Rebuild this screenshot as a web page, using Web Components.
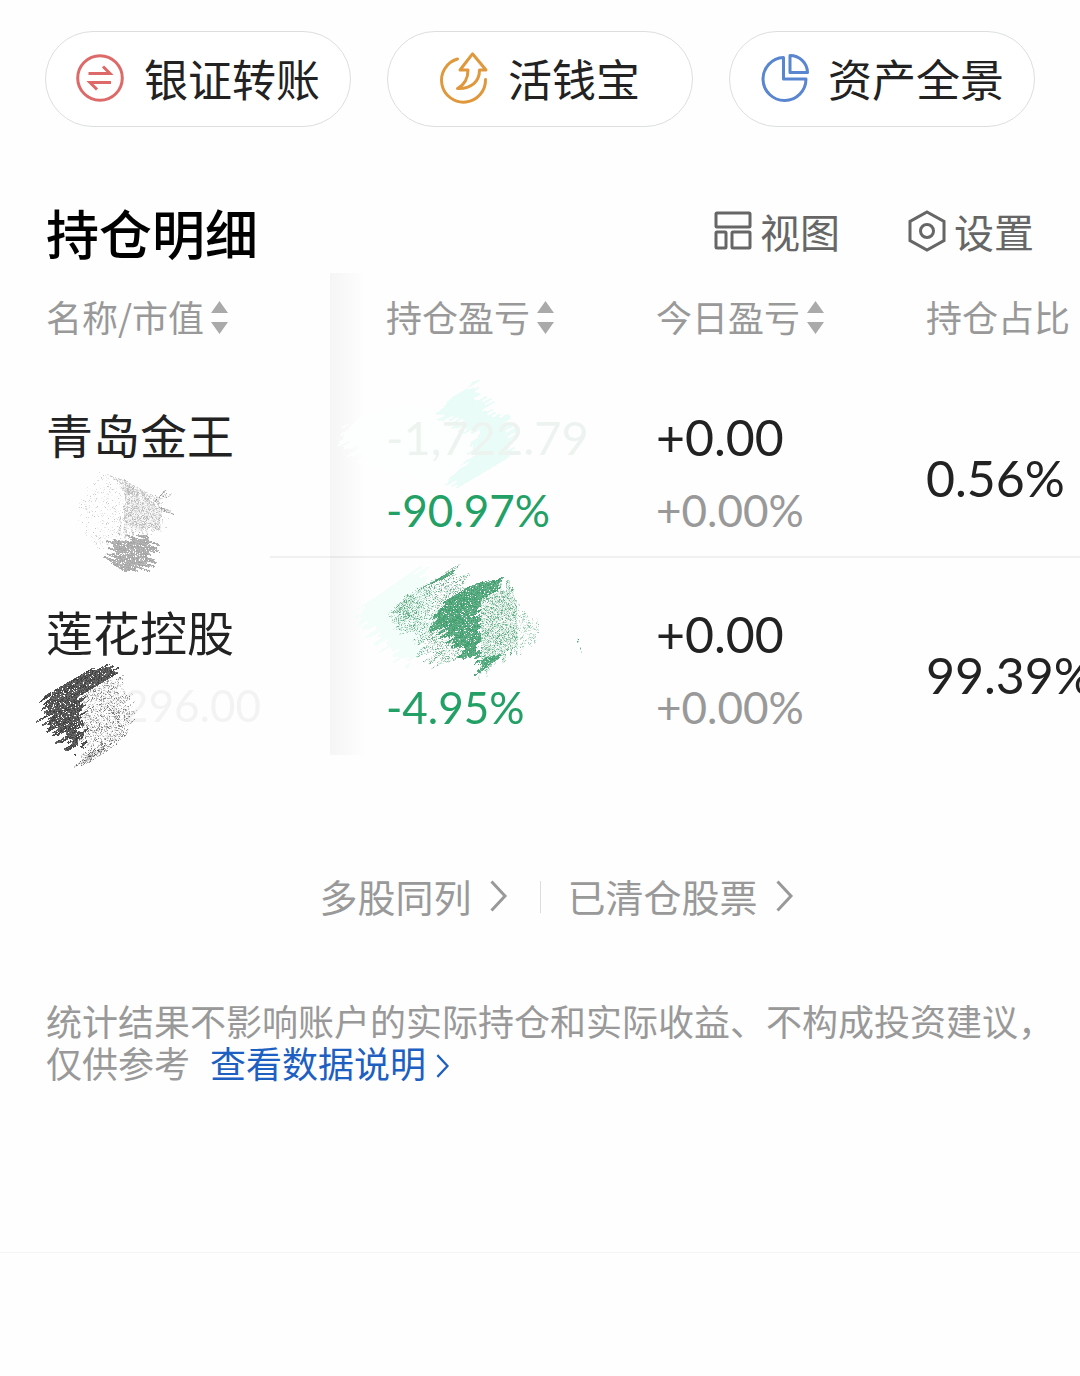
<!DOCTYPE html>
<html lang="zh-CN">
<head>
<meta charset="utf-8">
<meta name="viewport" content="width=device-width, initial-scale=1">
<title>持仓明细</title>
<style>
  body {
    margin: 0;
    background: #fefefe;
    color: #222;
    font-family: "Noto Sans CJK SC", sans-serif;
  }
</style>
</head>
<body>
<holdings-page></holdings-page>

<script>
const ICONS = {
  transfer: `<svg width="48" height="48" viewBox="0 0 48 48" fill="none" stroke="#dd6a68" stroke-width="3">
    <circle cx="24" cy="24" r="22.3"/>
    <path d="M12.500 19.500H34L27 12.500M35 28.500H14L21 35.500"/></svg>`,
  cash: `<svg width="48" height="52" viewBox="0 0 48 52" fill="none" stroke="#e0983c" stroke-width="3" stroke-linejoin="round" stroke-linecap="round">
    <path d="M17.500 7A22 22 0 1 0 45.500 27.500"/>
    <path d="M32.500 1.800L20 18H28C28 27 24 33 17.500 36.500C31 37 39.500 30 39.500 18H46Z"/></svg>`,
  pie: `<svg width="48" height="48" viewBox="0 0 48 48" fill="none" stroke="#5a86cf" stroke-width="3" stroke-linejoin="round">
    <path d="M23.500 3.500A21.500 21.500 0 1 0 46 25H23.500Z"/>
    <path d="M30 1.500V18.500H47.500A17.500 17.500 0 0 0 30 1.500Z"/></svg>`,
  view: `<svg width="38" height="40" viewBox="0 0 38 40" fill="none" stroke="#666" stroke-width="3">
    <rect x="2" y="2" width="34" height="14" rx="1"/>
    <rect x="2" y="21" width="10" height="16" rx="1"/>
    <rect x="18" y="21" width="18" height="16" rx="1"/></svg>`,
  settings: `<svg width="38" height="42" viewBox="0 0 38 42" fill="none" stroke="#666" stroke-width="3">
    <path d="M19 2L36 11.500V30.500L19 40L2 30.500V11.500Z"/>
    <circle cx="19" cy="21" r="6.500"/></svg>`,
  sort: `<svg width="17" height="34" viewBox="0 0 17 34" fill="#aaa">
    <path d="M8.500 0L17 12H0ZM0 21H17L8.500 33Z"/></svg>`,
  chevron: `<svg width="18" height="32" viewBox="0 0 18 32" fill="none" stroke="currentColor" stroke-width="3">
    <path d="M1.500 1.500L15 16L1.500 30.500"/></svg>`
};

class QuickPill extends HTMLElement {
  constructor() {
    super();
    this.attachShadow({ mode: 'open' });
    this.shadowRoot.innerHTML = `
      <style>
        :host { display: block; }
        button {
          display: flex;
          align-items: center;
          justify-content: center;
          gap: 20px;
          width: 100%;
          height: 96px;
          padding: 0 0 3px;
          border: 1px solid #dcdfde;
          border-radius: 48px;
          background: #fff;
          color: #222;
          font: 44px/60px "Noto Sans CJK SC", sans-serif;
          white-space: nowrap;
        }
        svg { display: block; overflow: visible; }
      </style>
      <button type="button">${ICONS[this.getAttribute('icon')]}<span><slot></slot></span></button>
    `;
  }
}

class ToolButton extends HTMLElement {
  constructor() {
    super();
    this.attachShadow({ mode: 'open' });
    this.shadowRoot.innerHTML = `
      <style>
        :host { display: block; }
        button {
          display: flex;
          align-items: center;
          gap: 8px;
          padding: 0 0 4px;
          border: 0;
          background: none;
          color: #666;
          font: 40px/56px "Noto Sans CJK SC", sans-serif;
        }
        svg { display: block; }
      </style>
      <button type="button">${ICONS[this.getAttribute('icon')]}<span><slot></slot></span></button>
    `;
  }
}

class MoreLink extends HTMLElement {
  constructor() {
    super();
    this.attachShadow({ mode: 'open' });
    this.shadowRoot.innerHTML = `
      <style>
        :host { display: block; }
        a {
          display: flex;
          align-items: center;
          gap: 18px;
          color: #999;
          font-size: 38px;
          line-height: 52px;
          padding-bottom: 2px;
          text-decoration: none;
        }
        svg { display: block; }
      </style>
      <a href="#"><slot></slot>${ICONS.chevron}</a>
    `;
  }
}

// Brush strokes that hide private amounts. Each stroke is a polygon filled
// with grain; its edge is frayed along the brush direction.
const STROKES = {
  ash: { width: 150, height: 120, layers: [
    { points: [[40, 2], [100, 32], [100, 55], [80, 66], [50, 74], [42, 86], [18, 64], [22, 26]], angle: 30, color: [190, 190, 190], density: 0.08 },
    { points: [[60, 14], [98, 33], [100, 55], [82, 64], [54, 66], [64, 38]], angle: 80, color: [170, 170, 170], density: 0.45 },
    { points: [[46, 4], [58, 8], [84, 22], [94, 32], [64, 24]], angle: 30, color: [180, 180, 180], density: 0.4 },
    { points: [[48, 74], [82, 64], [92, 76], [90, 92], [76, 102], [66, 104], [45, 90]], angle: 20, color: [160, 160, 160], density: 0.9 },
    { points: [[97, 36], [102, 39], [111, 41], [110, 45], [98, 41]], angle: 20, color: [140, 140, 140], density: 0.7 },
    { points: [[101, 21], [104, 20], [112, 23], [108, 27], [96, 30]], angle: -30, color: [100, 100, 100], density: 0.3 }
  ] },
  mint: { width: 290, height: 130, layers: [
    { points: [[80, 30], [20, 50], [10, 70], [40, 95], [110, 110], [150, 70]], angle: -30, color: [252, 255, 254], density: 1 },
    { points: [[142, 10], [108, 40], [145, 62], [142, 84], [120, 110], [135, 112], [184, 83], [182, 52], [160, 36]], angle: -30, color: [234, 252, 248], density: 1 }
  ] },
  green: { width: 290, height: 130, layers: [
    { points: [[87, 5], [27, 47], [30, 60], [60, 90], [83, 103], [100, 70], [100, 20]], angle: -32, color: [243, 254, 251], density: 1 },
    { points: [[123, 5], [93, 22], [63, 46], [67, 63], [93, 90], [107, 103], [145, 90], [125, 70], [140, 25]], angle: -32, color: [70, 155, 110], density: 0.28 },
    { points: [[70, 35], [84, 36], [85, 54], [70, 60], [63, 46]], angle: -32, color: [70, 155, 110], density: 0.35 },
    { points: [[126, 5], [128, 8], [108, 18], [92, 25]], angle: -32, color: [72, 160, 115], density: 0.9 },
    { points: [[167, 15], [137, 25], [112, 40], [103, 60], [118, 78], [133, 93], [150, 98], [151, 42], [177, 21]], angle: -32, color: [58, 155, 105], density: 0.93 },
    { points: [[151, 36], [180, 22], [186, 38], [186, 86], [163, 107], [147, 110], [151, 90]], angle: 90, color: [60, 155, 105], density: 0.42, erase: true },
    { points: [[186, 38], [208, 63], [208, 76], [186, 86]], angle: 90, color: [110, 185, 145], density: 0.22 },
    { points: [[152, 93], [168, 96], [146, 113], [144, 110]], angle: -32, color: [62, 160, 110], density: 0.85 },
    { points: [[248, 83], [250, 83], [251, 89], [247, 88]], angle: 80, color: [50, 150, 100], density: 0.8 }
  ] },
  coal: { width: 150, height: 120, layers: [
    { points: [[60, 6], [72, 8], [78, 16], [48, 34], [46, 92], [34, 88], [12, 68], [3, 52], [12, 34]], angle: -30, color: [56, 56, 56], density: 0.92 },
    { points: [[47, 34], [78, 16], [90, 32], [96, 60], [84, 82], [47, 108]], angle: -38, color: [90, 90, 90], density: 0.26, erase: true },
    { points: [[64, 84], [70, 88], [46, 106], [44, 102]], angle: -38, color: [60, 60, 60], density: 0.4 }
  ] }
};

class BrushMark extends HTMLElement {
  constructor() {
    super();
    const mark = STROKES[this.getAttribute('kind')];
    this.attachShadow({ mode: 'open' });
    this.shadowRoot.innerHTML = `
      <style>
        :host { display: block; pointer-events: none; }
        canvas { display: block; }
      </style>
      <canvas width="${mark.width}" height="${mark.height}"></canvas>
    `;
    this.draw(this.shadowRoot.querySelector('canvas'), mark);
  }

  draw(canvas, mark) {
    const ctx = canvas.getContext('2d');
    let seed = 7;
    const random = () => {
      seed = (seed * 1664525 + 1013904223) % 4294967296;
      return seed / 4294967296;
    };

    for (const layer of mark.layers) {
      const path = new Path2D();
      layer.points.forEach(([x, y]) => path.lineTo(x, y));
      path.closePath();

      const radians = layer.angle * Math.PI / 180;
      const dx = Math.cos(radians);
      const dy = Math.sin(radians);
      const fray = Array.from({ length: 600 }, () => (random() - 0.5) * 18);
      const solid = layer.density === 1;
      const dense = layer.density > 0.8;

      for (let y = 0; y < mark.height; y++) {
        for (let x = 0; x < mark.width; x++) {
          const across = Math.round((y * dx - x * dy) / 2) + 300;
          const shift = fray[across];
          if (!ctx.isPointInPath(path, x + dx * shift, y + dy * shift)) continue;
          if (layer.erase && ctx.isPointInPath(path, x, y)) {
            ctx.clearRect(x, y, 1, 1);
          }
          if (random() > (dense ? layer.density : layer.density * 2)) continue;
          const grain = random();
          ctx.globalAlpha = solid ? 1 : dense ? 0.7 + grain * 0.3 : grain * grain * 0.8 + 0.08;
          ctx.fillStyle = `rgb(${layer.color.join(',')})`;
          ctx.fillRect(x, y, 1, 1);
        }
      }
    }
  }
}

const HOLDINGS = [
  { name: '青岛金王', value: '', valueMark: 'ash', gain: '-1,722.79', gainMark: 'mint', gainRate: '-90.97%', today: '+0.00', todayRate: '+0.00%', share: '0.56%' },
  { name: '莲花控股', value: '296.00', valueMark: 'coal', gain: '', gainMark: 'green', gainRate: '-4.95%', today: '+0.00', todayRate: '+0.00%', share: '99.39%' }
];

class HoldingsTable extends HTMLElement {
  constructor() {
    super();
    this.attachShadow({ mode: 'open' });
    this.shadowRoot.innerHTML = `
      <style>
        :host { display: block; overflow-x: clip; }
        table {
          width: 1196px;
          table-layout: fixed;
          border-collapse: collapse;
          text-align: left;
          white-space: nowrap;
        }
        th, td { padding: 0; font-weight: 400; }
        .name { width: 330px; position: relative; }
        .gain { width: 326px; }
        th.name, td.name { padding-left: 46px; box-sizing: border-box; }
        th.gain, td.gain { padding-left: 56px; box-sizing: border-box; position: relative; }
        .name::after {
          content: "";
          position: absolute;
          top: 0;
          bottom: 0;
          left: 100%;
          width: 36px;
          background: linear-gradient(to right, rgba(0, 0, 0, 0.035), transparent);
        }
        thead th { height: 88px; }
        thead button {
          display: flex;
          align-items: center;
          gap: 7px;
          padding: 0 0 2px;
          border: 0;
          background: none;
          color: #999;
          font: 36px/48px "Noto Sans CJK SC", sans-serif;
        }
        thead svg { margin-top: 4px; }
        tbody td { height: 146px; padding-top: 40px; padding-bottom: 11px; }
        tbody td.share { padding-top: 44px; padding-bottom: 7px; }
        tbody tr:first-child {
          background: linear-gradient(to right, transparent 270px, #f0f0f0 270px) bottom / 100% 2px no-repeat;
        }
        .line { height: 73px; font-size: 47px; line-height: 73px; }
        .title { line-height: 66px; }
        .number { font-family: Lato, sans-serif; font-size: 50px; }
        .rate { font-family: Lato, sans-serif; font-size: 44px; color: #999; }
        .down { color: #22a065; }
        .faded { font-family: Lato, sans-serif; font-size: 47px; color: #edf4f0; }
        .gain .faded { position: relative; }
        .name .faded { font-size: 44px; line-height: 68px; color: #f3f3f3; padding-left: 77px; }
        brush-mark { position: absolute; }
        brush-mark[kind="ash"] { left: 62px; top: 108px; }
        brush-mark[kind="coal"] { left: 36px; top: 101px; }
        brush-mark[kind="mint"] { left: 0; top: 10px; }
        brush-mark[kind="green"] { left: 0; top: 4px; }
      </style>
      <table>
        <thead>
          <tr>
            <th class="name"><button type="button">名称/市值${ICONS.sort}</button></th>
            <th class="gain"><button type="button">持仓盈亏${ICONS.sort}</button></th>
            <th><button type="button">今日盈亏${ICONS.sort}</button></th>
            <th><button type="button">持仓占比</button></th>
          </tr>
        </thead>
        <tbody>${HOLDINGS.map(row => this.renderRow(row)).join('')}</tbody>
      </table>
    `;
  }

  renderRow(row) {
    return `
      <tr>
        <td class="name">
          <div class="line title">${row.name}</div>
          <div class="line faded">${row.value}</div>
          <brush-mark kind="${row.valueMark}"></brush-mark>
        </td>
        <td class="gain">
          <brush-mark kind="${row.gainMark}"></brush-mark>
          <div class="line faded">${row.gain}</div>
          <div class="line rate down">${row.gainRate}</div>
        </td>
        <td>
          <div class="line number">${row.today}</div>
          <div class="line rate">${row.todayRate}</div>
        </td>
        <td class="share"><div class="line number">${row.share}</div></td>
      </tr>
    `;
  }
}

class HoldingsPage extends HTMLElement {
  constructor() {
    super();
    this.attachShadow({ mode: 'open' });
    this.shadowRoot.innerHTML = `
      <style>
        :host { display: flex; flex-direction: column; min-height: 100vh; }
        nav {
          display: grid;
          grid-template-columns: repeat(3, 1fr);
          gap: 36px;
          padding: 31px 45px 0;
        }
        header {
          display: flex;
          align-items: center;
          gap: 68px;
          padding: 65px 46px 0;
        }
        h2 {
          flex: 1;
          margin: 0;
          color: #000;
          font-size: 53px;
          font-weight: 500;
          line-height: 81px;
        }
        .more {
          display: grid;
          grid-template-columns: 1fr 1px 1fr;
          align-items: center;
          margin-top: 115px;
        }
        .more i { height: 32px; background: #ddd; }
        .more more-link:first-child { justify-self: end; padding-right: 32px; }
        .more more-link:last-child { padding-left: 27px; }
        p {
          margin: 75px 20px 0 46px;
          color: #999;
          font-size: 36px;
          line-height: 42px;
        }
        p a { margin-left: 20px; color: #1e5fc2; text-decoration: none; }
        p svg { width: 14px; height: 24px; margin-left: 10px; }
        footer { height: 124px; margin-top: auto; border-top: 1px solid #f4f4f4; box-sizing: border-box; }
      </style>
      <nav>
        <quick-pill icon="transfer">银证转账</quick-pill>
        <quick-pill icon="cash">活钱宝</quick-pill>
        <quick-pill icon="pie">资产全景</quick-pill>
      </nav>
      <header>
        <h2>持仓明细</h2>
        <tool-button icon="view">视图</tool-button>
        <tool-button icon="settings">设置</tool-button>
      </header>
      <holdings-table></holdings-table>
      <div class="more">
        <more-link>多股同列</more-link>
        <i></i>
        <more-link>已清仓股票</more-link>
      </div>
      <p>统计结果不影响账户的实际持仓和实际收益、不构成投资建议，仅供参考<a href="#">查看数据说明${ICONS.chevron}</a></p>
      <footer></footer>
    `;
  }
}

customElements.define('quick-pill', QuickPill);
customElements.define('tool-button', ToolButton);
customElements.define('more-link', MoreLink);
customElements.define('brush-mark', BrushMark);
customElements.define('holdings-table', HoldingsTable);
customElements.define('holdings-page', HoldingsPage);
</script>
</body>
</html>
